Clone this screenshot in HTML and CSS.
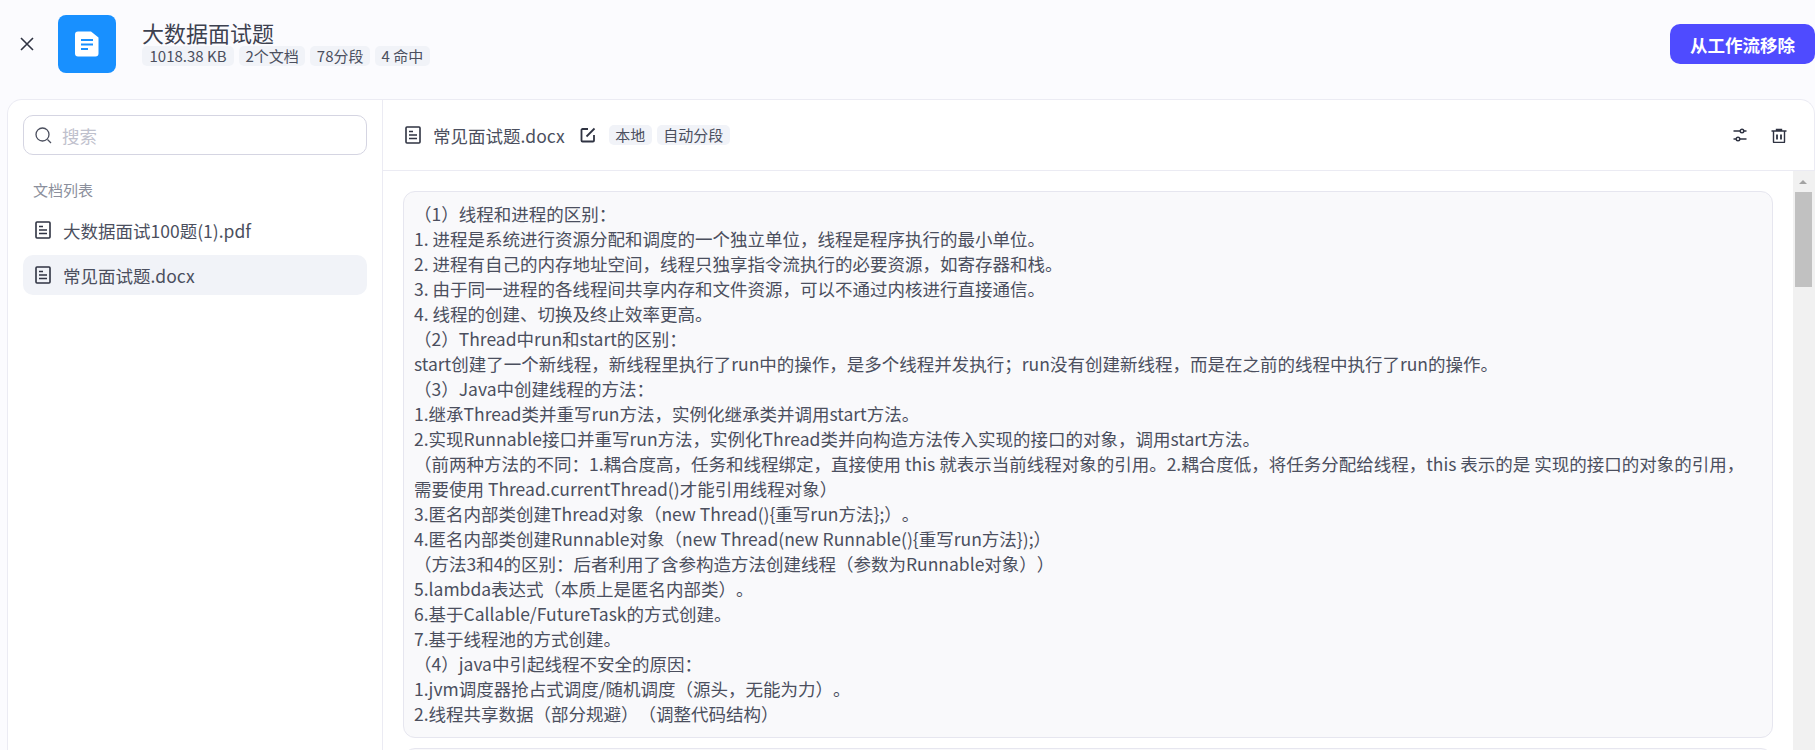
FILE: index.html
```html
<!DOCTYPE html>
<html>

<head>
    <meta charset='UTF-8'>
    <title>大数据面试题</title>
    <link rel="stylesheet" href="styles.css">
</head>

<body>
    <header class="top-bar">
        <svg class="close-icon" width="14" height="14" viewBox="0 0 14 14">
            <path d="M1 1l12 12M13 1L1 13" />
        </svg>
        <div class="kb-icon">
            <svg width="24" height="26" viewBox="0 0 24 26">
                <path class="sheet" d="M3 0.500h13l7.500 6v16a3 3 0 0 1-3 3H3a3 3 0 0 1-3-3V3.500a3 3 0 0 1 3-3z" />
                <path class="sheet-lines" d="M6 9h12M6 13.500h12M6 18h7" />
            </svg>
        </div>
        <div class="kb-info">
            <h1 class="kb-title">大数据面试题</h1>
            <div class="tag-row">
                <span class="tag size">1018.38 KB</span>
                <span class="tag">2个文档</span>
                <span class="tag">78分段</span>
                <span class="tag">4 命中</span>
            </div>
        </div>
        <button class="remove-btn">从工作流移除</button>
    </header>

    <main class="panel">
        <aside class="side">
            <div class="search">
                <svg width="17" height="17" viewBox="0 0 17 17">
                    <circle cx="7.500" cy="7.500" r="6.500" />
                    <path d="M12.500 12.500l3.500 3.500" />
                </svg>
                <span class="placeholder">搜索</span>
            </div>
            <div class="side-label">文档列表</div>
            <div class="doc-item">
                <svg class="doc-icon" width="16" height="18" viewBox="0 0 16 18">
                    <rect x="1" y="1" width="14" height="16" rx="1" />
                    <path d="M4 5.500h4M4 9h8M4 12.500h8" />
                </svg>
                <span>大数据面试100题(1).pdf</span>
            </div>
            <div class="doc-item active">
                <svg class="doc-icon" width="16" height="18" viewBox="0 0 16 18">
                    <rect x="1" y="1" width="14" height="16" rx="1" />
                    <path d="M4 5.500h4M4 9h8M4 12.500h8" />
                </svg>
                <span>常见面试题.docx</span>
            </div>
        </aside>

        <section class="content">
            <div class="content-head">
                <svg class="doc-icon" width="16" height="18" viewBox="0 0 16 18">
                    <rect x="1" y="1" width="14" height="16" rx="1" />
                    <path d="M4 5.500h4M4 9h8M4 12.500h8" />
                </svg>
                <span class="doc-name">常见面试题.docx</span>
                <svg class="edit-icon" width="16" height="16" viewBox="0 0 16 16">
                    <path d="M8 2H2.500a1 1 0 0 0-1 1v10.500a1 1 0 0 0 1 1H13a1 1 0 0 0 1-1V8" />
                    <path d="M6.500 9.500L14.500 1.500" />
                </svg>
                <div class="tag-row">
                    <span class="tag">本地</span>
                    <span class="tag">自动分段</span>
                </div>
                <div class="head-actions">
                    <svg class="tool-icon" width="14" height="14" viewBox="0 0 14 14">
                        <path d="M0.500 3h6.500M11 3h2.500M0.500 11h2.500M7 11h6.500" />
                        <circle cx="9" cy="3" r="1.800" />
                        <circle cx="5" cy="11" r="1.800" />
                    </svg>
                    <svg class="tool-icon" width="16" height="16" viewBox="0 0 16 16">
                        <path d="M0.500 4h15M5.500 4V2.500h5V4" />
                        <path d="M2.500 4v11a0.500 0.500 0 0 0 0.500 0.500h10a0.500 0.500 0 0 0 0.500-0.500V4" />
                        <path class="bar" d="M6 7.500v5M10 7.500v5" />
                    </svg>
                </div>
            </div>
            <div class="content-body">
                <div class="chunks">
                    <div class="chunk">（1）线程和进程的区别：
1. 进程是系统进行资源分配和调度的一个独立单位，线程是程序执行的最小单位。
2. 进程有自己的内存地址空间，线程只独享指令流执行的必要资源，如寄存器和栈。
3. 由于同一进程的各线程间共享内存和文件资源，可以不通过内核进行直接通信。
4. 线程的创建、切换及终止效率更高。
（2）Thread中run和start的区别：
start创建了一个新线程，新线程里执行了run中的操作，是多个线程并发执行；run没有创建新线程，而是在之前的线程中执行了run的操作。
（3）Java中创建线程的方法：
1.继承Thread类并重写run方法，实例化继承类并调用start方法。
2.实现Runnable接口并重写run方法，实例化Thread类并向构造方法传入实现的接口的对象，调用start方法。
（前两种方法的不同：1.耦合度高，任务和线程绑定，直接使用 this 就表示当前线程对象的引用。2.耦合度低，将任务分配给线程，this 表示的是 实现的接口的对象的引用，需要使用 Thread.currentThread()才能引用线程对象）
3.匿名内部类创建Thread对象（new Thread(){重写run方法};）。
4.匿名内部类创建Runnable对象（new Thread(new Runnable(){重写run方法});）
（方法3和4的区别：后者利用了含参构造方法创建线程（参数为Runnable对象））
5.lambda表达式（本质上是匿名内部类）。
6.基于Callable/FutureTask的方式创建。
7.基于线程池的方式创建。
（4）java中引起线程不安全的原因：
1.jvm调度器抢占式调度/随机调度（源头，无能为力）。
2.线程共享数据（部分规避）（调整代码结构）</div>
                    <div class="chunk next"></div>
                </div>
                <!-- 滚动条 -->
                <div class="scrollbar">
                    <div class="scroll-arrow"></div>
                    <div class="scroll-thumb"></div>
                </div>
            </div>
        </section>
    </main>
</body>

</html>
```
FILE: styles.css
```css
* {
    box-sizing: border-box;
}

html,
body {
    height: 750px;
    margin: 0;
    overflow: hidden;
}

body {
    background-color: #fbfbfe;
    color: #4b4f5e;
    font-family: "Noto Sans CJK SC", "Noto Sans", sans-serif;
    font-size: 17.5px;
    text-spacing-trim: space-all;
}

/* 顶部栏 */
.top-bar {
    display: flex;
    align-items: center;
    height: 99px;
    padding: 0 0 11px 20px;
}

.close-icon path {
    fill: none;
    stroke: #2f3342;
    stroke-width: 1.6;
}

.kb-icon {
    display: flex;
    align-items: center;
    justify-content: center;
    width: 58px;
    height: 58px;
    margin: 0 26px 0 24px;
    border-radius: 8px;
    background-color: #1890ff;
}

.sheet {
    fill: #fff;
}

.sheet-lines {
    fill: none;
    stroke: #1890ff;
    stroke-width: 2;
}

.kb-title {
    margin: -3px 0 0;
    color: #3d4150;
    font-size: 22px;
    font-weight: 400;
    line-height: 27px;
}

.tag-row {
    display: flex;
    gap: 5px;
}

.tag {
    height: 20px;
    padding: 0 6.500px;
    border-radius: 5px;
    background-color: #f1f3f8;
    color: #4b4f5e;
    font-size: 15px;
    line-height: 20px;
    white-space: nowrap;
}

.tag.size {
    padding: 0 7.500px;
}

.remove-btn {
    width: 145px;
    height: 40px;
    margin-left: auto;
    padding: 0;
    border: 0;
    border-radius: 10px;
    background-color: #4f4bff;
    color: #fff;
    font: inherit;
    font-weight: 700;
}

/* 主面板 */
.panel {
    display: flex;
    height: 651px;
    margin-left: 7px;
    border: 1px solid #ebebf3;
    border-bottom: 0;
    border-radius: 15px 15px 0 0;
    background-color: #fff;
}

.side {
    flex: none;
    width: 375px;
    padding: 15px 15px 0;
    border-right: 1px solid #ebebf3;
}

.search {
    display: flex;
    align-items: center;
    height: 40px;
    padding-left: 11px;
    border: 1px solid #d5d5e2;
    border-radius: 10px;
}

.search svg {
    fill: none;
    stroke: #4b4f5e;
    stroke-width: 1.3;
}

.placeholder {
    margin-left: 10px;
    color: #bfc1cd;
}

.side-label {
    margin: 22px 0 7px 10px;
    color: #8b8f9c;
    font-size: 15px;
    line-height: 26px;
}

.doc-item {
    display: flex;
    align-items: center;
    height: 40px;
    margin-bottom: 5px;
    padding-left: 12px;
    border-radius: 10px;
}

.doc-item.active {
    background-color: #f1f3f8;
}

.doc-icon {
    flex: none;
    margin-right: 12px;
}

.doc-icon rect,
.doc-icon path {
    fill: none;
    stroke: #2f3342;
    stroke-width: 1.6;
}

/* 右侧内容 */
.content {
    display: flex;
    flex-direction: column;
    flex: 1;
    min-width: 0;
}

.content-head {
    display: flex;
    flex: none;
    align-items: center;
    height: 71px;
    padding: 0 27px 0 22px;
    border-bottom: 1px solid #ebebf3;
}

.edit-icon {
    flex: none;
    margin: 0 13px 0 15px;
}

.edit-icon path {
    fill: none;
    stroke: #2f3342;
    stroke-width: 1.8;
}

.head-actions {
    display: flex;
    align-items: center;
    gap: 24px;
    margin-left: auto;
}

.tool-icon path,
.tool-icon circle {
    fill: none;
    stroke: #2f3342;
    stroke-width: 1.4;
}

.tool-icon .bar {
    stroke-width: 1.8;
}

.content-body {
    display: flex;
    flex: 1;
    min-height: 0;
}

.chunks {
    flex: 1;
    min-width: 0;
    padding: 20px 20px 0;
    overflow: hidden;
}

.chunk {
    height: 547px;
    margin-bottom: 10px;
    padding: 9px 13px 9px 10px;
    border: 1px solid #e6e6ef;
    border-radius: 12px;
    background-color: #f9f9fb;
    line-height: 25px;
    white-space: pre-line;
}

.scrollbar {
    flex: none;
    width: 22px;
    margin-right: -1px;
    padding: 0 3px 0 2px;
    background-color: #f1f1f1;
}

.scroll-arrow {
    width: 0;
    height: 0;
    margin: 9px 0 8px 4px;
    border-right: 4.500px solid transparent;
    border-bottom: 4px solid #a3a3a3;
    border-left: 4.500px solid transparent;
}

.scroll-thumb {
    height: 95px;
    background-color: #c1c1c1;
}
```
